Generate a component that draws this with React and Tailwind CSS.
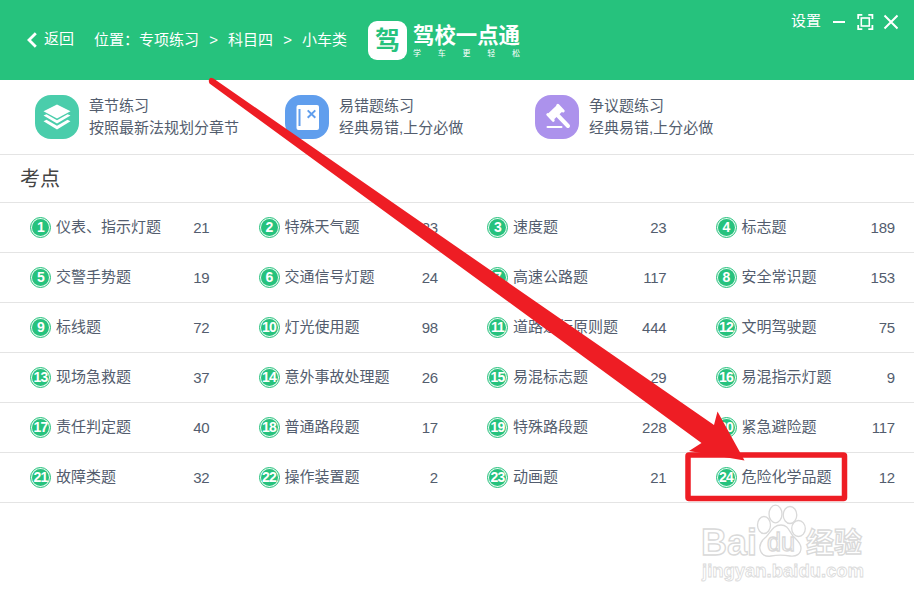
import React from 'react';

const topics = [
  ['仪表、指示灯题', 21],
  ['特殊天气题', 23],
  ['速度题', 23],
  ['标志题', 189],
  ['交警手势题', 19],
  ['交通信号灯题', 24],
  ['高速公路题', 117],
  ['安全常识题', 153],
  ['标线题', 72],
  ['灯光使用题', 98],
  ['道路通行原则题', 444],
  ['文明驾驶题', 75],
  ['现场急救题', 37],
  ['意外事故处理题', 26],
  ['易混标志题', 29],
  ['易混指示灯题', 9],
  ['责任判定题', 40],
  ['普通路段题', 17],
  ['特殊路段题', 228],
  ['紧急避险题', 117],
  ['故障类题', 32],
  ['操作装置题', 2],
  ['动画题', 21],
  ['危险化学品题', 12],
];

const LayersIcon = () => (
  <svg width="44" height="44" viewBox="0 0 44 44" fill="#fff">
    <path d="M22 9.6 35.500 16.200 22 23.600 8.500 16.200Z" />
    <path d="M8.500 20.600 11.500 19.200 22 25.200 32.500 19.200 35.500 20.600 22 28.600Z" />
    <path d="M8.500 26.200 11.500 24.800 22 30.800 32.500 24.800 35.500 26.200 22 34.400Z" />
  </svg>
);

const NotebookIcon = () => (
  <svg width="44" height="44" viewBox="0 0 44 44">
    <rect x="11.500" y="10" width="22.500" height="25" rx="2" fill="#fff" />
    <path d="M14.500 14v17M22.700 15.400l7.600 7.400M30.300 15.400l-7.600 7.400" stroke="#609eed" strokeWidth="2" fill="none" />
  </svg>
);

const GavelIcon = () => (
  <svg width="44" height="44" viewBox="0 0 44 44" fill="none" stroke="#fff">
    <path d="M20 17.500 33 31" strokeWidth="4" strokeLinecap="round" />
    <path d="M16 21.500 25 13" strokeWidth="8.500" />
    <path d="M12.800 19.500 18.200 25.300M22.800 10.300 28.200 16" strokeWidth="3" strokeLinecap="round" />
    <path d="M12.500 32h14" strokeWidth="2" strokeLinecap="round" />
  </svg>
);

const practices = [
  { title: '章节练习', desc: '按照最新法规划分章节', Icon: LayersIcon, color: 'bg-[#4acdab]' },
  { title: '易错题练习', desc: '经典易错,上分必做', Icon: NotebookIcon, color: 'bg-[#609eed]' },
  { title: '争议题练习', desc: '经典易错,上分必做', Icon: GavelIcon, color: 'bg-[#ac92ec]' },
];

const Header = () => (
  <header className="flex h-20 bg-[#26c27d] text-[15px] leading-5 text-white">
    <div className="flex w-[368px] items-center pl-[27px]">
      <svg width="10" height="16" viewBox="0 0 10 16" fill="none" stroke="#fff" strokeWidth="2.8">
        <path d="M8.800 1.200 2 8l6.800 6.800" />
      </svg>
      <span className="ml-[7px] -mt-0.5">返回</span>
      <nav className="ml-5 flex whitespace-pre">
        <span>位置：</span>
        <span>专项练习</span>
        <span className="w-[29px] text-center">&gt;</span>
        <span>科目四</span>
        <span className="w-[29px] text-center">&gt;</span>
        <span>小车类</span>
      </nav>
    </div>
    <div className="flex items-start pt-[21px]">
      <div className="flex size-[39px] items-center justify-center rounded-[9px] bg-white text-[25px] leading-none font-bold text-[#26c27d]">
        驾
      </div>
      <div className="ml-1.5 w-[107px] pt-[3px]">
        <div className="text-[21.4px] leading-6 font-bold whitespace-nowrap">驾校一点通</div>
        <div className="mt-px flex justify-between text-[8px] leading-2.5">
          {['学', '车', '更', '轻', '松'].map((c) => (
            <span key={c}>{c}</span>
          ))}
        </div>
      </div>
    </div>
    <div className="ml-auto flex h-11 items-center pr-4">
      <span className="-mt-0.5">设置</span>
      <svg className="ml-[11px]" width="66" height="18" viewBox="0 0 66 18" fill="none" stroke="#fff" strokeWidth="2">
        <path d="M1 9h12" />
        <rect x="29.300" y="5" width="8" height="8" strokeWidth="1.600" />
        <path d="M26.200 6V1.900h4.100M36.300 1.900h4.100V6M40.400 12v4.100h-4.100M30.300 16.100h-4.100V12" strokeWidth="1.800" />
        <path d="M52.500 2.500l13 13M65.500 2.500l-13 13" />
      </svg>
    </div>
  </header>
);

const Badge = ({ n }) => (
  <span className="flex size-[21px] shrink-0 items-center justify-center rounded-full border border-[#26c27d] bg-[#e6f8ef]">
    <span className="flex size-[17px] shrink-0 items-center justify-center rounded-full bg-[#26c27d] pb-px text-[14px] leading-none font-bold tracking-[-0.8px] text-white">
      {n}
    </span>
  </span>
);

// outlined watermark in the bottom right corner
const Watermark = () => (
  <svg
    className="absolute top-[500px] left-[696px]"
    width="180"
    height="90"
    viewBox="0 0 180 90"
    fill="#fff"
    stroke="#d9d9d9"
    strokeWidth="1.300"
  >
    <text x="5" y="55" fontSize="36" fontWeight="bold" textLength="56" lengthAdjust="spacingAndGlyphs">Bai</text>
    <ellipse cx="68" cy="25" rx="6.500" ry="8.500" />
    <ellipse cx="79.500" cy="14" rx="6.500" ry="8.800" />
    <ellipse cx="94" cy="15" rx="6.800" ry="8.500" />
    <ellipse cx="102.500" cy="28.500" rx="6.800" ry="8" />
    <path d="M85 25c-8 0-10 7-15 12-5 4-7 7-6 12 1 6 6 8 11 7 6-1 13-1 19 0 6 1 11-2 11-8 0-5-4-8-8-12-4-5-5-11-12-11Z" />
    <text x="71" y="51" fontSize="25" textLength="28" lengthAdjust="spacingAndGlyphs">du</text>
    <text x="110" y="53" fontSize="28" fontWeight="bold">经验</text>
    <text x="6" y="77" fontSize="19" fontWeight="bold" strokeWidth="0.800" textLength="162" lengthAdjust="spacingAndGlyphs">
      jingyan.baidu.com
    </text>
  </svg>
);

const App = () => {
  return (
    <div className="relative h-[602px] w-[914px] overflow-hidden bg-white font-['Liberation_Sans','Noto_Sans_CJK_SC',sans-serif] text-[15px] text-[#535d6e]">
      <Header />

      <section className="flex h-[75px] border-b border-[#e4e4e4] pt-[15px] pl-[35px]">
        {practices.map(({ title, desc, Icon, color }) => (
          <div key={title} className="flex w-[250px]">
            <div className={`size-11 shrink-0 rounded-[16px] ${color}`}>
              <Icon />
            </div>
            <div className="ml-2.5 leading-[22px] whitespace-nowrap">
              <p>{title}</p>
              <p>{desc}</p>
            </div>
          </div>
        ))}
      </section>

      <h2 className="flex h-12 items-center border-b border-[#e4e4e4] pl-5 text-[20px] text-[#444]">考点</h2>

      <ul className="grid grid-cols-4">
        {topics.map(([name, count], i) => (
          <li key={name} className="flex h-[50px] items-center border-b border-[#e4e4e4] pr-[19px] pl-[30px]">
            <Badge n={i + 1} />
            <span className="ml-[5px] whitespace-nowrap">{name}</span>
            <span className="ml-auto pt-0.5 tracking-[-0.2px]">{count}</span>
          </li>
        ))}
      </ul>

      <Watermark />

      {/* Arrow and frame pointing at the last topic */}
      <svg className="absolute top-0 left-0" width="914" height="602" viewBox="0 0 914 602">
        <path
          d="M213.500 78.500 714 425 717.500 411.500 744.500 460.500 689 451 701.500 443 209.500 83.500Q207.500 79 211 77.800Z"
          fill="#ee1d24"
        />
        <rect x="688" y="455" width="156.500" height="43.500" rx="1" fill="none" stroke="#ee1d24" strokeWidth="5.500" strokeLinejoin="round" />
      </svg>
    </div>
  );
};

export default App;
